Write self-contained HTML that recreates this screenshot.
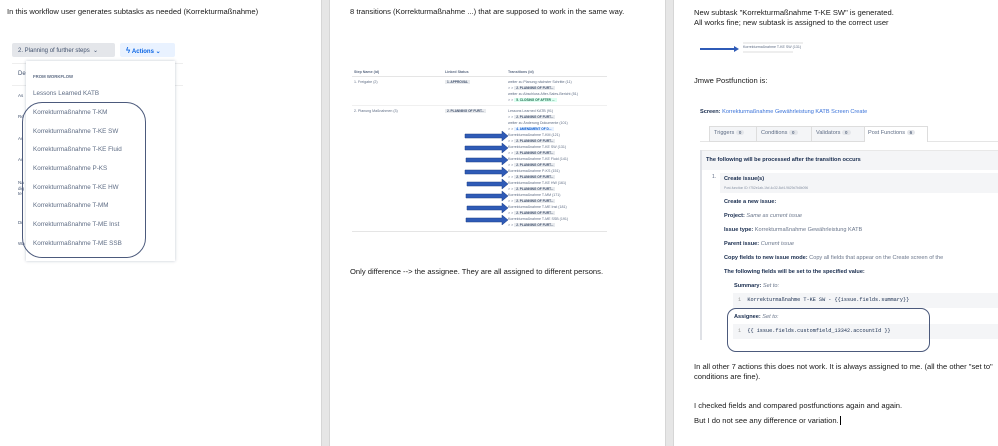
<!DOCTYPE html>
<html><head><meta charset="utf-8"><style>
*{margin:0;padding:0;box-sizing:border-box}
body{width:998px;height:446px;position:relative;background:#fff;font-family:"Liberation Sans",sans-serif;color:#222;overflow:hidden}
.a{position:absolute;white-space:nowrap}
.t{font-size:7.6px;color:#1a1a1a}
.sep{position:absolute;top:0;height:446px;width:9px;background:#e6e6e6;border-left:1px solid #d6d6d6;border-right:1px solid #d6d6d6}
.item{font-size:6.3px;color:#5e6c84}
.lk{color:#3b73d9}
.tiny{font-size:3.6px;color:#5e6c84}
.lz{background:#e9ebee;color:#42526e;font-size:3.2px;padding:0 2px;font-weight:bold}
.b{font-weight:bold;color:#172b4d}
.s{font-size:5.6px}
.i{font-style:italic;color:#6b778c;font-weight:normal}
</style></head><body>
<div class="sep" style="left:321px"></div>
<div class="sep" style="left:665px"></div>

<!-- Page 1 -->
<div class="a t" style="left:7px;top:7px">In this workflow user generates subtasks as needed (Korrekturmaßnahme)</div>
<div class="a" style="left:12px;top:43px;width:103px;height:14px;background:#e4e6ea;border-radius:2px;font-size:6px;color:#42526e;padding:4px 0 0 6px">2. Planning of further steps&nbsp;&nbsp;⌄</div>
<div class="a" style="left:120px;top:43px;width:55px;height:14px;background:#e9f2ff;border-radius:2px;font-size:6px;color:#0c66e4;padding:3px 0 0 6px;font-weight:bold"><span style="font-size:8px">ϟ</span> Actions ⌄</div>
<div class="a" style="left:12px;top:63px;width:171px;height:200px;border-top:1px solid #eee"></div>
<div class="a" style="left:12px;top:85px;width:171px;border-top:1px solid #eee"></div>
<div class="a" style="left:18px;top:71px;font-size:6px;color:#42526e">De</div>
<div class="a" style="left:18px;top:93px;font-size:4.5px;color:#42526e">As</div>
<div class="a" style="left:18px;top:114px;font-size:4.5px;color:#42526e">Re</div>
<div class="a" style="left:18px;top:136px;font-size:4.5px;color:#42526e">Ac</div>
<div class="a" style="left:18px;top:157px;font-size:4.5px;color:#42526e">Ac</div>
<div class="a" style="left:18px;top:180px;font-size:4.5px;color:#42526e;line-height:5.5px">Na<br>dig<br>tel</div>
<div class="a" style="left:18px;top:220px;font-size:4.5px;color:#42526e">Dr</div>
<div class="a" style="left:18px;top:241px;font-size:4.5px;color:#42526e">Wa</div>
<div class="a" style="left:26px;top:61px;width:149px;height:200px;background:#fff;box-shadow:0 0 3px rgba(9,30,66,.25)"></div>
<div class="a" style="left:33px;top:74px;font-size:4.3px;font-weight:bold;color:#5e6c84">FROM WORKFLOW</div>
<div class="a item" style="left:33px;top:90px">Lessons Learned KATB</div>
<div class="a item" style="left:33px;top:109px">Korrekturmaßnahme T-KM</div>
<div class="a item" style="left:33px;top:128px">Korrekturmaßnahme T-KE SW</div>
<div class="a item" style="left:33px;top:146px">Korrekturmaßnahme T-KE Fluid</div>
<div class="a item" style="left:33px;top:165px">Korrekturmaßnahme P-KS</div>
<div class="a item" style="left:33px;top:184px">Korrekturmaßnahme T-KE HW</div>
<div class="a item" style="left:33px;top:202px">Korrekturmaßnahme T-MM</div>
<div class="a item" style="left:33px;top:221px">Korrekturmaßnahme T-ME Inst</div>
<div class="a item" style="left:33px;top:240px">Korrekturmaßnahme T-ME SSB</div>
<div class="a" style="left:22px;top:102px;width:124px;height:156px;border:1px solid #4c5a7c;border-radius:20px"></div>

<!-- Page 2 -->
<div class="a t" style="left:350px;top:7px">8 transitions (Korrekturmaßnahme ...) that are supposed to work in the same way.</div>
<div class="a tiny" style="left:354px;top:70px;font-weight:bold">Step Name (id)</div>
<div class="a tiny" style="left:445px;top:70px;font-weight:bold">Linked Status</div>
<div class="a tiny" style="left:508px;top:70px;font-weight:bold">Transitions (id)</div>
<div class="a" style="left:352px;top:76px;width:255px;border-top:1px solid #e5e5e5"></div>
<div class="a" style="left:352px;top:231px;width:255px;border-top:1px solid #e5e5e5"></div>
<div class="a" style="left:352px;top:105px;width:255px;border-top:1px solid #f0f0f0"></div>
<div class="a tiny lk" style="left:354px;top:80px">1. Freigabe <span style="color:#5e6c84">(2)</span></div>
<div class="a tiny lk" style="left:354px;top:109px">2. Planung Maßnahmen <span style="color:#5e6c84">(3)</span></div>
<div class="a lz" style="left:445px;top:80px">1. APPROVAL</div>
<div class="a lz" style="left:445px;top:109px">2. PLANNING OF FURT...</div>
<div class="a tiny lk" style="left:508px;top:80px">weiter zu Planung nächster Schritte <span style="color:#5e6c84">(11)</span></div>
<div class="a tiny" style="left:508px;top:86px">&gt; &gt; <span class="lz">2. PLANNING OF FURT...</span></div>
<div class="a tiny lk" style="left:508px;top:92px">weiter zu Abschluss After-Sales-Bericht <span style="color:#5e6c84">(51)</span></div>
<div class="a tiny" style="left:508px;top:98px">&gt; &gt; <span class="lz" style="background:#dcfff1;color:#216e4e">5. CLOSING OF AFTER ...</span></div>
<div class="a tiny lk" style="left:508px;top:109px">Lessons Learned KATB <span style="color:#5e6c84">(91)</span></div>
<div class="a tiny" style="left:508px;top:115px">&gt; &gt; <span class="lz">2. PLANNING OF FURT...</span></div>
<div class="a tiny lk" style="left:508px;top:121px">weiter zu Änderung Dokumente <span style="color:#5e6c84">(101)</span></div>
<div class="a tiny" style="left:508px;top:127px">&gt; &gt; <span class="lz" style="background:#e9f2ff;color:#0055cc">4. AMENDMENT OF D...</span></div>
<div class="a tiny lk" style="left:508px;top:133px">Korrekturmaßnahme T-KM <span style="color:#5e6c84">(121)</span></div>
<div class="a tiny" style="left:508px;top:139px">&gt; &gt; <span class="lz">2. PLANNING OF FURT...</span></div>
<div class="a tiny lk" style="left:508px;top:145px">Korrekturmaßnahme T-KE SW <span style="color:#5e6c84">(131)</span></div>
<div class="a tiny" style="left:508px;top:151px">&gt; &gt; <span class="lz">2. PLANNING OF FURT...</span></div>
<div class="a tiny lk" style="left:508px;top:157px">Korrekturmaßnahme T-KE Fluid <span style="color:#5e6c84">(141)</span></div>
<div class="a tiny" style="left:508px;top:163px">&gt; &gt; <span class="lz">2. PLANNING OF FURT...</span></div>
<div class="a tiny lk" style="left:508px;top:169px">Korrekturmaßnahme P-KS <span style="color:#5e6c84">(151)</span></div>
<div class="a tiny" style="left:508px;top:175px">&gt; &gt; <span class="lz">2. PLANNING OF FURT...</span></div>
<div class="a tiny lk" style="left:508px;top:181px">Korrekturmaßnahme T-KE HW <span style="color:#5e6c84">(161)</span></div>
<div class="a tiny" style="left:508px;top:187px">&gt; &gt; <span class="lz">2. PLANNING OF FURT...</span></div>
<div class="a tiny lk" style="left:508px;top:193px">Korrekturmaßnahme T-MM <span style="color:#5e6c84">(171)</span></div>
<div class="a tiny" style="left:508px;top:199px">&gt; &gt; <span class="lz">2. PLANNING OF FURT...</span></div>
<div class="a tiny lk" style="left:508px;top:205px">Korrekturmaßnahme T-ME Inst <span style="color:#5e6c84">(181)</span></div>
<div class="a tiny" style="left:508px;top:211px">&gt; &gt; <span class="lz">2. PLANNING OF FURT...</span></div>
<div class="a tiny lk" style="left:508px;top:217px">Korrekturmaßnahme T-ME SSB <span style="color:#5e6c84">(191)</span></div>
<div class="a tiny" style="left:508px;top:223px">&gt; &gt; <span class="lz">2. PLANNING OF FURT...</span></div>
<svg class="a" style="left:460px;top:130px" width="50" height="95">
<g fill="#2f5bb7" stroke="#1f3f86" stroke-width=".5">
<path d="M5 4h37v-3l6 5-6 5v-3H5z"/>
<path d="M5 16h37v-3l6 5-6 5v-3H5z"/>
<path d="M6 28h36v-3l6 5-6 5v-3H6z"/>
<path d="M5 40h37v-3l6 5-6 5v-3H5z"/>
<path d="M7 52h35v-3l6 5-6 5v-3H7z"/>
<path d="M6 64h36v-3l6 5-6 5v-3H6z"/>
<path d="M7 76h35v-3l6 5-6 5v-3H7z"/>
<path d="M6 88h36v-3l6 5-6 5v-3H6z"/>
</g></svg>
<div class="a t" style="left:350px;top:267px">Only difference --&gt; the assignee. They are all assigned to different persons.</div>

<!-- Page 3 -->
<div class="a t" style="left:694px;top:8px;line-height:10px">New subtask "Korrekturmaßnahme T-KE SW" is generated.<br>All works fine; new subtask is assigned to the correct user</div>
<svg class="a" style="left:699px;top:45px" width="42" height="8"><path d="M1 3h34v-2l5 3-5 3v-2H1z" fill="#2f5bb7"/></svg>
<div class="a" style="left:743px;top:42px;width:60px;height:2px;background:#eee"></div>
<div class="a tiny lk" style="left:743px;top:45px">Korrekturmaßnahme T-KE SW <span style="color:#5e6c84">(131)</span></div>
<div class="a" style="left:743px;top:51px;width:50px;height:2px;background:#eee"></div>
<div class="a t" style="left:694px;top:76px">Jmwe Postfunction is:</div>
<div class="a s" style="left:700px;top:109px"><b class="b">Screen:</b> <span class="lk">Korrekturmaßnahme Gewährleistung KATB Screen Create</span></div>
<div class="a" style="left:700px;top:141px;width:298px;border-top:1px solid #e5e5e5"></div>
<div class="a" style="left:709px;top:126px;width:219px;height:16px;background:#f4f5f7;border:1px solid #ddd"></div>
<div class="a" style="left:864px;top:126px;width:64px;height:16px;background:#fff;border:1px solid #ddd;border-bottom:none"></div>
<div class="a s" style="left:714px;top:130px;color:#5e6c84">Triggers <span style="background:#e4e6ea;border-radius:4px;padding:0 3px;font-size:4.5px;font-weight:bold">0</span></div>
<div class="a" style="left:756px;top:127px;height:14px;border-left:1px solid #ddd"></div>
<div class="a s" style="left:761px;top:130px;color:#5e6c84">Conditions <span style="background:#e4e6ea;border-radius:4px;padding:0 3px;font-size:4.5px;font-weight:bold">0</span></div>
<div class="a" style="left:811px;top:127px;height:14px;border-left:1px solid #ddd"></div>
<div class="a s" style="left:816px;top:130px;color:#5e6c84">Validators <span style="background:#e4e6ea;border-radius:4px;padding:0 3px;font-size:4.5px;font-weight:bold">0</span></div>
<div class="a s" style="left:868px;top:130px;color:#5e6c84">Post Functions <span style="background:#e4e6ea;border-radius:4px;padding:0 3px;font-size:4.5px;font-weight:bold">6</span></div>
<div class="a" style="left:700px;top:150px;width:298px;height:20px;background:#f4f5f7;border-top:1px solid #e8e8e8"></div>
<div class="a" style="left:700px;top:150px;width:2px;height:190px;background:#dfe1e6"></div>
<div class="a s b" style="left:706px;top:157px">The following will be processed after the transition occurs</div>
<div class="a s" style="left:712px;top:174px;color:#5e6c84;font-size:5px">1.</div>
<div class="a" style="left:720px;top:173px;width:278px;height:20px;background:#f4f5f7"></div>
<div class="a s b" style="left:724px;top:176px">Create issue(s)</div>
<div class="a" style="left:724px;top:186px;font-size:3.3px;color:#8993a4">Post-function ID: f752e1ab-1fcf-4c32-8cf4-9629d7b8b096</div>
<div class="a s b" style="left:724px;top:199px">Create a new issue:</div>
<div class="a s b" style="left:724px;top:213px">Project: <span class="i">Same as current issue</span></div>
<div class="a s b" style="left:724px;top:227px">Issue type: <span class="i" style="font-style:normal">Korrekturmaßnahme Gewährleistung KATB</span></div>
<div class="a s b" style="left:724px;top:241px">Parent issue: <span class="i">Current issue</span></div>
<div class="a s b" style="left:724px;top:255px">Copy fields to new issue mode: <span class="i" style="font-style:normal">Copy all fields that appear on the Create screen of the</span></div>
<div class="a s b" style="left:724px;top:269px">The following fields will be set to the specified value:</div>
<div class="a s b" style="left:734px;top:283px">Summary: <span class="i">Set to:</span></div>
<div class="a" style="left:733px;top:293px;width:265px;height:15px;background:#f4f5f7"></div>
<div class="a" style="left:738px;top:297px;font-size:5.2px;font-family:'Liberation Mono',monospace;color:#172b4d"><span style="color:#999">1</span>&nbsp;&nbsp;Korrekturmaßnahme T-KE SW - {{issue.fields.summary}}</div>
<div class="a s b" style="left:734px;top:314px">Assignee: <span class="i">Set to:</span></div>
<div class="a" style="left:733px;top:324px;width:265px;height:15px;background:#f4f5f7"></div>
<div class="a" style="left:738px;top:328px;font-size:5.2px;font-family:'Liberation Mono',monospace;color:#172b4d"><span style="color:#999">1</span>&nbsp;&nbsp;{{ issue.fields.customfield_13342.accountId }}</div>
<div class="a" style="left:727px;top:308px;width:203px;height:44px;border:1px solid #4c5a7c;border-radius:9px"></div>
<div class="a t" style="left:694px;top:362px;line-height:10px">In all other 7 actions this does not work. It is always assigned to me. (all the other "set to"<br>conditions are fine).</div>
<div class="a t" style="left:694px;top:401px">I checked fields and compared postfunctions again and again.</div>
<div class="a t" style="left:694px;top:416px">But I do not see any difference or variation.<span style="border-left:1px solid #000;margin-left:1px"></span></div>
</body></html>
